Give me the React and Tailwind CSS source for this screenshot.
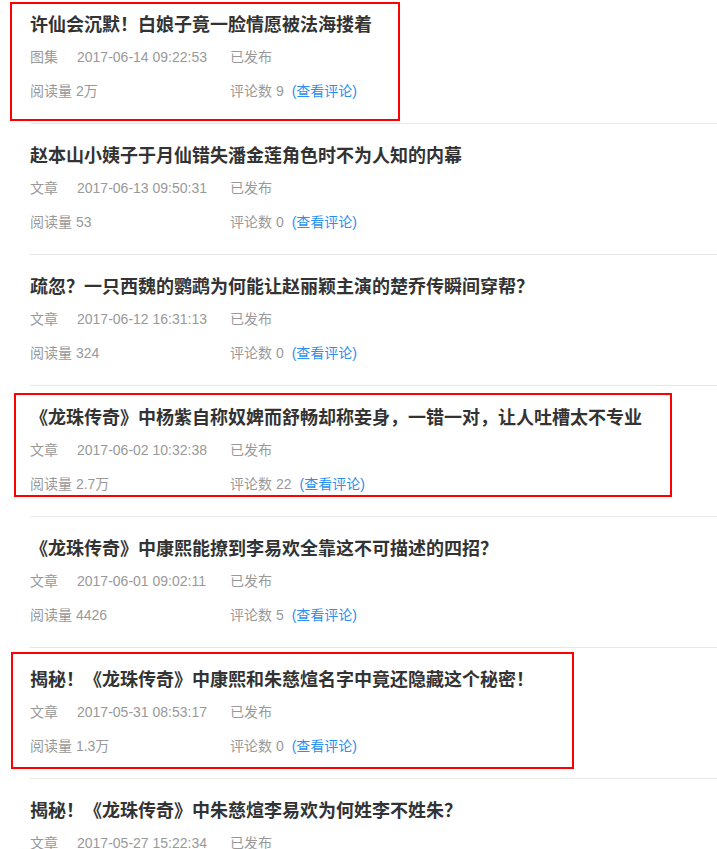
const articles = [
  { title: '许仙会沉默！白娘子竟一脸情愿被法海搂着', type: '图集', time: '2017-06-14 09:22:53', reads: '2万', comments: 9 },
  { title: '赵本山小姨子于月仙错失潘金莲角色时不为人知的内幕', type: '文章', time: '2017-06-13 09:50:31', reads: '53', comments: 0 },
  { title: '疏忽？一只西魏的鹦鹉为何能让赵丽颖主演的楚乔传瞬间穿帮？', type: '文章', time: '2017-06-12 16:31:13', reads: '324', comments: 0 },
  { title: '《龙珠传奇》中杨紫自称奴婢而舒畅却称妾身，一错一对，让人吐槽太不专业', type: '文章', time: '2017-06-02 10:32:38', reads: '2.7万', comments: 22 },
  { title: '《龙珠传奇》中康熙能撩到李易欢全靠这不可描述的四招？', type: '文章', time: '2017-06-01 09:02:11', reads: '4426', comments: 5 },
  { title: '揭秘！《龙珠传奇》中康熙和朱慈煊名字中竟还隐藏这个秘密！', type: '文章', time: '2017-05-31 08:53:17', reads: '1.3万', comments: 0 },
  { title: '揭秘！《龙珠传奇》中朱慈煊李易欢为何姓李不姓朱？', type: '文章', time: '2017-05-27 15:22:34', reads: '1.1万', comments: 0 },
];

function ArticleRow({ item }) {
  return (
    <li className="border-b border-[#e8e8e8] pt-[20px] pb-[22px]">
      <h3 className="text-[18px] leading-6 font-bold text-[#333] whitespace-nowrap">{item.title}</h3>
      <div className="mt-[10px] flex text-[14px] leading-5 text-[#999]">
        <span className="w-[47px]">{item.type}</span>
        <span className="w-[153px]">{item.time}</span>
        <span>已发布</span>
      </div>
      <div className="mt-[14px] flex text-[14px] leading-5 text-[#999]">
        <span className="w-[200px]">阅读量 {item.reads}</span>
        <span>评论数 {item.comments}</span>
        <a href="#" className="ml-2 text-[#2a8ff0]">(查看评论)</a>
      </div>
    </li>
  );
}

export default function App() {
  return (
    <div
      className="relative h-[849px] w-[717px] overflow-hidden bg-white"
      style={{ fontFamily: '"Liberation Sans", "Noto Sans CJK SC", sans-serif' }}
    >
      <ul className="-mt-[7px] pl-[30px]">
        {articles.map((a) => (
          <ArticleRow key={a.time} item={a} />
        ))}
      </ul>

      {/* red annotation boxes */}
      <div className="absolute left-[10px] top-[2px] h-[119px] w-[390px] border-2 border-[#ff0000]" />
      <div className="absolute left-[14px] top-[393px] h-[104px] w-[658px] border-2 border-[#ff0000]" />
      <div className="absolute left-[11px] top-[652px] h-[117px] w-[563px] border-2 border-[#ff0000]" />
    </div>
  );
}
